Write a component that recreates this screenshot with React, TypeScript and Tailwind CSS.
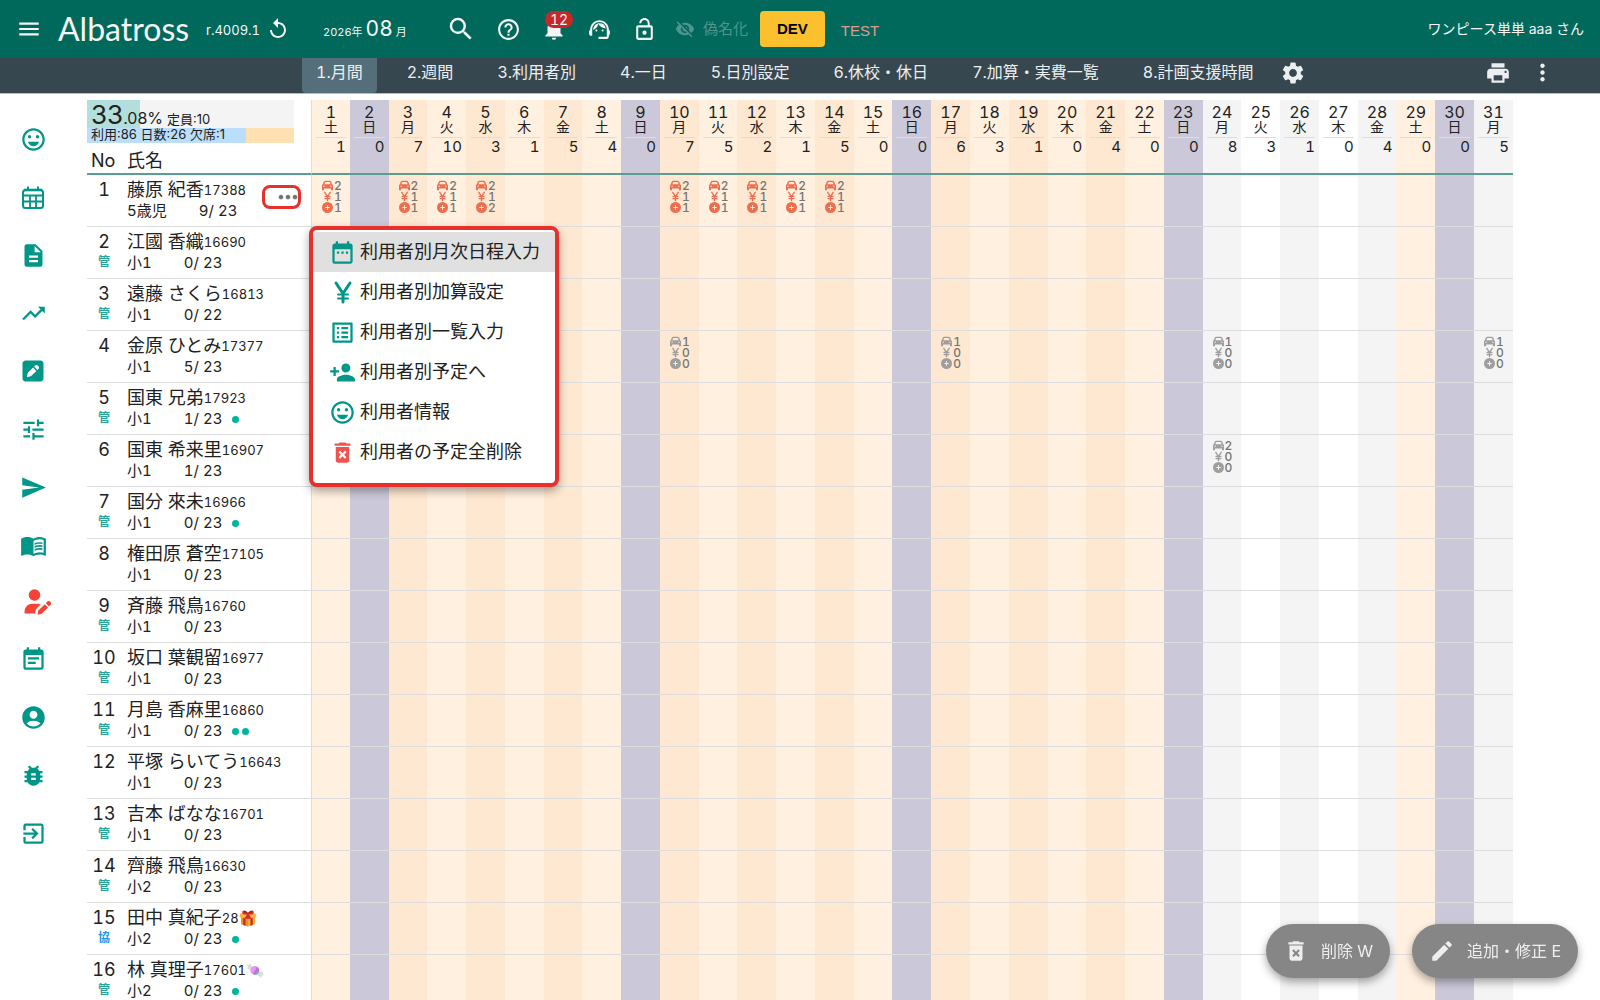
import { type ReactNode } from "react";
import { clsx } from "clsx";
import { FaCar, FaCirclePlus, FaSquarePen, FaYenSign } from "react-icons/fa6";
import {
  MdAccountCircle,
  MdBugReport,
  MdDateRange,
  MdDeleteForever,
  MdDescription,
  MdEdit,
  MdEventNote,
  MdExitToApp,
  MdHelpOutline,
  MdListAlt,
  MdLockOpen,
  MdMenu,
  MdMenuBook,
  MdMoreHoriz,
  MdMoreVert,
  MdNotifications,
  MdOutlineEmojiEmotions,
  MdPersonAdd,
  MdPrint,
  MdReplay,
  MdSearch,
  MdSend,
  MdSettings,
  MdSupportAgent,
  MdTrendingUp,
  MdTune,
  MdVisibilityOff,
} from "react-icons/md";

const WEEKDAYS = ["日", "月", "火", "水", "木", "金", "土"];

// 1日〜31日の利用人数
const TOTALS = [
  1, 0, 7, 10, 3, 1, 5, 4, 0, 7, 5, 2, 1, 5, 0, 0, 6, 3, 1, 0, 4, 0, 0, 8, 3, 1, 0, 4, 0, 0, 5,
];

const DAYS = TOTALS.map((total, i) => ({ day: i + 1, wd: (i + 6) % 7, total }));

type Entry = [car: number, yen: number, plus: number];

type User = {
  name: string;
  code: string;
  grade: string;
  used: number;
  limit: number;
  mark?: "管" | "協";
  dots?: number;
  gift?: "box" | "candy";
  plan?: Record<number, Entry>;
  draft?: boolean;
};

const USERS: User[] = [
  {
    name: "藤原 紀香",
    code: "17388",
    grade: "5歳児",
    used: 9,
    limit: 23,
    plan: {
      1: [2, 1, 1],
      3: [2, 1, 1],
      4: [2, 1, 1],
      5: [2, 1, 2],
      10: [2, 1, 1],
      11: [2, 1, 1],
      12: [2, 1, 1],
      13: [2, 1, 1],
      14: [2, 1, 1],
    },
  },
  { name: "江國 香織", code: "16690", grade: "小1", used: 0, limit: 23, mark: "管" },
  { name: "遠藤 さくら", code: "16813", grade: "小1", used: 0, limit: 22, mark: "管" },
  {
    name: "金原 ひとみ",
    code: "17377",
    grade: "小1",
    used: 5,
    limit: 23,
    draft: true,
    plan: { 10: [1, 0, 0], 17: [1, 0, 0], 24: [1, 0, 0], 31: [1, 0, 0] },
  },
  { name: "国東 兄弟", code: "17923", grade: "小1", used: 1, limit: 23, mark: "管", dots: 1 },
  {
    name: "国東 希来里",
    code: "16907",
    grade: "小1",
    used: 1,
    limit: 23,
    draft: true,
    plan: { 24: [2, 0, 0] },
  },
  { name: "国分 來未", code: "16966", grade: "小1", used: 0, limit: 23, mark: "管", dots: 1 },
  { name: "権田原 蒼空", code: "17105", grade: "小1", used: 0, limit: 23 },
  { name: "斉藤 飛鳥", code: "16760", grade: "小1", used: 0, limit: 23, mark: "管" },
  { name: "坂口 葉観留", code: "16977", grade: "小1", used: 0, limit: 23, mark: "管" },
  { name: "月島 香麻里", code: "16860", grade: "小1", used: 0, limit: 23, mark: "管", dots: 2 },
  { name: "平塚 らいてう", code: "16643", grade: "小1", used: 0, limit: 23 },
  { name: "吉本 ばなな", code: "16701", grade: "小1", used: 0, limit: 23, mark: "管" },
  { name: "齊藤 飛鳥", code: "16630", grade: "小2", used: 0, limit: 23, mark: "管" },
  { name: "田中 真紀子", code: "28", grade: "小2", used: 0, limit: 23, mark: "協", dots: 1, gift: "box" },
  { name: "林 真理子", code: "17601", grade: "小2", used: 0, limit: 23, mark: "管", dots: 1, gift: "candy" },
];

const TABS = [
  "1.月間",
  "2.週間",
  "3.利用者別",
  "4.一日",
  "5.日別設定",
  "6.休校・休日",
  "7.加算・実費一覧",
  "8.計画支援時間",
];

const MENU: { label: string; icon: ReactNode }[] = [
  { label: "利用者別月次日程入力", icon: <MdDateRange className="size-[27px]" /> },
  { label: "利用者別加算設定", icon: <YenIcon /> },
  { label: "利用者別一覧入力", icon: <MdListAlt className="size-[27px]" /> },
  { label: "利用者別予定へ", icon: <MdPersonAdd className="size-[27px]" /> },
  { label: "利用者情報", icon: <MdOutlineEmojiEmotions className="size-[27px]" /> },
  { label: "利用者の予定全削除", icon: <MdDeleteForever className="size-[27px] text-[#ef5350]" /> },
];

const SIDE: { label: string; icon: ReactNode }[] = [
  { label: "利用者", icon: <MdOutlineEmojiEmotions className="size-[27px]" /> },
  { label: "予定表", icon: <CalendarGridIcon /> },
  { label: "記録", icon: <MdDescription className="size-[27px]" /> },
  { label: "集計", icon: <MdTrendingUp className="size-[27px]" /> },
  { label: "編集", icon: <FaSquarePen className="size-6" /> },
  { label: "調整", icon: <MdTune className="size-[27px]" /> },
  { label: "送信", icon: <MdSend className="size-[27px]" /> },
  { label: "マニュアル", icon: <MdMenuBook className="size-[27px]" /> },
  { label: "利用者編集", icon: <UserPenIcon /> },
  { label: "連絡帳", icon: <MdEventNote className="size-[27px]" /> },
  { label: "アカウント", icon: <MdAccountCircle className="size-[27px]" /> },
  { label: "不具合報告", icon: <MdBugReport className="size-[27px]" /> },
  { label: "ログアウト", icon: <MdExitToApp className="size-[27px]" /> },
];

/** 月〜金は1日おきに濃淡、24日以降の平日は未確定なのでグレー系 */
function columnColor(day: number, wd: number) {
  if (wd === 0) return "bg-[#cbc9d9]";
  if (wd === 6) return "bg-[#fff0e0]";
  const strong = wd % 2 === 1;
  if (day >= 24) return strong ? "bg-[#f4f4f4]" : "bg-white";
  return strong ? "bg-[#ffe8d1]" : "bg-[#fff0e0]";
}

function YenIcon() {
  return (
    <svg
      viewBox="0 0 20 24"
      className="h-6 w-5"
      fill="none"
      stroke="currentColor"
      strokeWidth="3"
      strokeLinecap="round"
    >
      <path d="M3 3l7 10.500L17 3M10 13.500V22" />
      <path d="M5 14.500h10M5 18.500h10" strokeWidth="2" />
    </svg>
  );
}

function CalendarGridIcon() {
  return (
    <svg viewBox="0 0 22 23" className="h-[23px] w-[22px]" fill="none" stroke="currentColor">
      <rect x="1" y="4" width="20" height="18" rx="2.500" strokeWidth="2" />
      <path d="M2 9.500h18M2 15.500h18M8 10v12M14 10v12" strokeWidth="1.800" />
      <path d="M6 0.500v4M16 0.500v4" strokeWidth="2" />
      <path d="M2 4h18" strokeWidth="2.600" />
    </svg>
  );
}

function UserPenIcon() {
  return (
    <svg viewBox="0 0 28 26" className="ml-[9px] h-[26px] w-7 text-[#f44336]" fill="currentColor">
      <circle cx="10.500" cy="6" r="5.800" />
      <path d="M.5 23.500C.5 18 4 14.700 8.500 14.700h4.500c1.500 0 2.500.3 3.600.8l-4.400 4.600c-.5.600-.8 2.700-1 4.400H1.500c-.6 0-1-.4-1-1z" />
      <path d="M13.500 25.700l.8-4.200 6.500-6.300 3.200 3.200-6.300 6.400z" />
      <path d="M21.800 14.200l1.600-1.600c1.800-1.700 4.900 1.300 3.200 3.200L25 17.400z" />
    </svg>
  );
}

function GiftIcon() {
  return (
    <svg viewBox="0 0 18 18" className="size-[18px]">
      <path d="M2 7.5l7 2v8l-7-2.2z" fill="#e8941f" />
      <path d="M16 7.5l-7 2v8l7-2.2z" fill="#f6ab35" />
      <path d="M.8 4.8L9 3l8.2 1.8v3.4L9 10.2.8 8.2z" fill="#f9b53f" />
      <path d="M4.3 8.8l2.2.6v7.4l-2.2-.7zM13.7 8.8l-2.2.6v7.4l2.2-.7z" fill="#c62828" />
      <path
        d="M8 5.2C5 6 3 5 3.2 2.9 3.6.8 7 .8 9 4c2-3.2 5.400-3.2 5.800-1.100C15 5 13 6 10 5.200l2.500 4.300-3.500.6-3.500-.6z"
        fill="#d32f2f"
      />
      <path d="M5 3c1-.8 2.300.2 3 1.300M13 3c-1-.8-2.300.2-3 1.300" stroke="#8e1515" fill="none" />
    </svg>
  );
}

function CandyIcon() {
  return (
    <svg viewBox="0 0 18 18" className="size-[18px]">
      <path d="M.5 3.500L3 4 3.500 2 7 6.500 4.500 9 1 7.500 2.200 6z" fill="#d9dbe5" />
      <path d="M11 13.500l3-3 3.500.8-1 1.400 1.500 1.600-2.300.3-.4 2.400z" fill="#d9dbe5" />
      <circle cx="9" cy="9.500" r="4.300" fill="#c96be0" />
      <path d="M5 8a4.300 4.300 0 0 1 6-2.400L7 13.300A4.300 4.300 0 0 1 5 8z" fill="#e29bf0" />
      <path d="M10 13.700a4.300 4.300 0 0 0 3.200-3.200L10.500 10z" fill="#5cc58c" />
    </svg>
  );
}

function Header() {
  return (
    <header className="flex h-[58px] items-center bg-[#00695c] text-[#f5f5f5]">
      <div className="flex w-[307px] shrink-0 items-center pl-4">
        <button aria-label="メニュー">
          <MdMenu className="size-[26px]" />
        </button>
        <a href="#" className="ml-4 w-[148px] font-['Lato'] text-[32px] leading-9">
          Albatross
        </a>
        <span className="w-[60px] pt-1 text-[13px]">r.4009.1</span>
        <button aria-label="再読み込み">
          <MdReplay className="size-6" />
        </button>
      </div>
      <button className="flex w-[136px] shrink-0 items-baseline gap-[3px] pl-4 text-[11px]">
        <span>2026年</span>
        <span className="text-[21px]">08</span>
        <span>月</span>
      </button>
      <div className="flex shrink-0 items-center">
        <button aria-label="検索" className="mr-5 ml-[3px]">
          <MdSearch className="size-[30px]" />
        </button>
        <button aria-label="ヘルプ" className="mr-5">
          <MdHelpOutline className="size-[25px]" />
        </button>
        <button aria-label="お知らせ 12件" className="relative mr-5">
          <MdNotifications className="size-[26px]" />
          <span className="absolute -top-[5px] left-1 rounded-full bg-[#c62828] px-[5px] text-sm leading-[17px]">
            12
          </span>
        </button>
        <button aria-label="サポート" className="mr-5">
          <MdSupportAgent className="size-[25px]" />
        </button>
        <button aria-label="ロック" className="mr-[18px]">
          <MdLockOpen className="size-[25px]" />
        </button>
        <button className="flex items-center gap-2 text-[15px] text-[#4f958c]">
          <MdVisibilityOff className="size-5" />
          偽名化
        </button>
        <button className="ml-3 h-9 rounded bg-[#fbc02d] px-[17px] font-['Liberation_Sans'] text-[15px] font-bold text-black">
          DEV
        </button>
        <span className="ml-4 pt-1 font-['Liberation_Sans'] text-[15px] text-[#e09a90]">TEST</span>
      </div>
      <span className="mr-4 ml-auto text-sm">ワンピース単単 aaa さん</span>
    </header>
  );
}

function TabBar() {
  return (
    <nav className="flex h-9 items-center border-b border-[#b0bec5] bg-[#37474f] pr-[44px] pl-[302px] text-[#eceff1]">
      <div className="flex h-full shrink-0 gap-4">
        {TABS.map((tab, i) => (
          <a
            key={tab}
            href="#"
            className={clsx(
              "h-full rounded-b px-[14px] text-base leading-7 whitespace-nowrap",
              i === 0 && "bg-[#546e7a]",
            )}
          >
            {tab}
          </a>
        ))}
      </div>
      <button aria-label="設定" className="ml-3 pb-1.5">
        <MdSettings className="size-[26px]" />
      </button>
      <div className="ml-auto flex gap-[18px] pb-1.5">
        <button aria-label="印刷">
          <MdPrint className="size-[26px]" />
        </button>
        <button aria-label="その他">
          <MdMoreVert className="size-[27px]" />
        </button>
      </div>
    </nav>
  );
}

function Sidebar() {
  return (
    <nav className="w-[87px] shrink-0 pt-4 text-[#009688]">
      {SIDE.map(({ label, icon }, i) => (
        <a
          key={label}
          href="#"
          aria-label={label}
          className={clsx("flex w-[66px] items-center justify-center", i === 8 ? "h-14" : "h-[58px]")}
        >
          {icon}
        </a>
      ))}
    </nav>
  );
}

const PLAN_ICONS = [FaCar, FaYenSign, FaCirclePlus];

function PlanCell({ entry, draft }: { entry: Entry; draft?: boolean }) {
  return (
    <div className="pl-[10px] text-xs font-medium text-[#757575]">
      {entry.map((value, i) => {
        const Icon = PLAN_ICONS[i];
        return (
          <div key={i} className="flex h-[11px] items-center gap-px leading-[11px]">
            <Icon className={clsx("size-[11px]", draft ? "text-[#9e9e9e]" : "text-[#ec6e4f]")} />
            {value}
          </div>
        );
      })}
    </div>
  );
}

function UserMenu() {
  return (
    <div className="absolute top-[51px] left-[222px] z-10 w-[250px] rounded-lg border-4 border-[#e5302c] bg-white pt-0.5 pb-[11px] shadow-[0_4px_10px_rgba(0,0,0,0.35)]">
      {MENU.map(({ label, icon }, i) => (
        <button
          key={label}
          className={clsx(
            "flex h-10 w-full items-center pl-4 text-lg font-normal text-[#212121]",
            i === 0 && "bg-[#e0e0e0]",
          )}
        >
          <span className="mr-1 flex w-[27px] justify-center text-[#009688]">{icon}</span>
          {label}
        </button>
      ))}
    </div>
  );
}

function UserHeading({ user, no }: { user: User; no: number }) {
  return (
    <div className="relative flex h-[51px] pt-[3px]">
      <div className="flex w-[34px] flex-col items-center">
        <span className="text-lg leading-6">{no}</span>
        <span
          className={clsx(
            "text-xs leading-4 font-bold",
            user.mark === "協" ? "text-[#2196f3]" : "text-[#26a69a]",
          )}
        >
          {user.mark}
        </span>
      </div>
      <div className="ml-[6px] whitespace-nowrap">
        <div className="flex h-6 items-center text-lg leading-6">
          {user.name}
          <span className="text-[13px]">{user.code}</span>
          {user.gift === "box" && <GiftIcon />}
          {user.gift === "candy" && <CandyIcon />}
        </div>
        <div className="flex items-center text-[15px] leading-[18px]">
          <span>{user.grade}</span>
          <span className="ml-8">
            {user.used}/ {user.limit}
          </span>
          <span className="ml-[10px] flex gap-[3px]">
            {Array.from({ length: user.dots ?? 0 }, (_, i) => (
              <i key={i} className="size-[7px] rounded-full bg-[#00b5a0]" />
            ))}
          </span>
        </div>
      </div>
      {no === 1 && (
        <>
          <button
            aria-label="利用者メニュー"
            className="absolute top-[10px] left-[175px] flex h-6 w-[39px] items-center justify-end rounded-lg border-3 border-[#e5302c] text-[#757575]"
          >
            <MdMoreHoriz className="-mr-1 size-7 shrink-0" />
          </button>
          <UserMenu />
        </>
      )}
    </div>
  );
}

function Summary() {
  return (
    <div className="h-[73px] proportional-nums">
      <div className="w-[207px]">
        <div className="h-7 bg-[linear-gradient(90deg,#b2dfdb_53px,#f4f4f4_53px)] pl-1 leading-[30px] whitespace-nowrap">
          <span className="text-[26px]">33</span>
          <span className="text-base">.08%</span>
          <span className="ml-1 text-[13px]">定員:10</span>
        </div>
        <div className="h-[15px] bg-[linear-gradient(90deg,#bbdefb_77%,#ffe0b2_77%)] pl-1 text-[13px] leading-[13px] whitespace-nowrap">
          利用:86 日数:26 欠席:1
        </div>
      </div>
      <div className="flex pt-1.5 text-lg leading-6">
        <span className="w-9 pl-1">No</span>
        <span className="ml-1">氏名</span>
      </div>
    </div>
  );
}

function MonthTable() {
  return (
    <table className="w-full table-fixed border-separate border-spacing-0">
      <thead>
        <tr>
          <th className="w-[224px] border-b-2 border-[#5a9e92] p-0 text-left align-top font-normal">
            <Summary />
          </th>
          {DAYS.map(({ day, wd, total }) => (
            <th
              key={day}
              className={clsx(
                "border-b-2 border-b-[#5a9e92] p-0 px-1 pt-1 align-top text-base font-normal",
                day === 1 && "border-l border-l-[#dddddd]",
                columnColor(day, wd),
              )}
            >
              <div className="leading-4">{day}</div>
              <div className="border-b border-[#dddddd] pb-1 text-sm leading-[13px]">
                {WEEKDAYS[wd]}
              </div>
              <div className="text-right text-[15px] leading-[17px]">{total}</div>
            </th>
          ))}
        </tr>
      </thead>
      <tbody>
        {USERS.map((user, i) => (
          <tr key={user.code}>
            <th className="border-b border-[#dddddd] p-0 text-left font-normal">
              <UserHeading user={user} no={i + 1} />
            </th>
            {DAYS.map(({ day, wd }) => (
              <td
                key={day}
                className={clsx(
                  "border-b border-b-[#dddddd] p-0 pt-[5px] align-top",
                  day === 1 && "border-l border-l-[#dddddd]",
                  columnColor(day, wd),
                )}
              >
                {user.plan?.[day] && <PlanCell entry={user.plan[day]} draft={user.draft} />}
              </td>
            ))}
          </tr>
        ))}
      </tbody>
    </table>
  );
}

const FAB =
  "flex h-[54px] items-center gap-3 rounded-full bg-[#868686] px-[17px] text-base text-[#eeeeee] shadow-[0_4px_8px_rgba(0,0,0,0.35)]";

export default function App() {
  return (
    <div className="h-screen overflow-hidden bg-white font-['Inter','Noto_Sans_CJK_JP',sans-serif] text-[#212121] tabular-nums">
      <Header />
      <TabBar />
      <div className="flex">
        <Sidebar />
        <main className="min-w-0 flex-1 pt-1.5 pr-[87px]">
          <MonthTable />
        </main>
      </div>
      <div className="fixed right-[22px] bottom-[22px] flex gap-[22px]">
        <button className={FAB}>
          <MdDeleteForever className="size-[26px]" />
          削除 W
        </button>
        <button className={FAB}>
          <MdEdit className="size-[26px]" />
          追加・修正 E
        </button>
      </div>
    </div>
  );
}
